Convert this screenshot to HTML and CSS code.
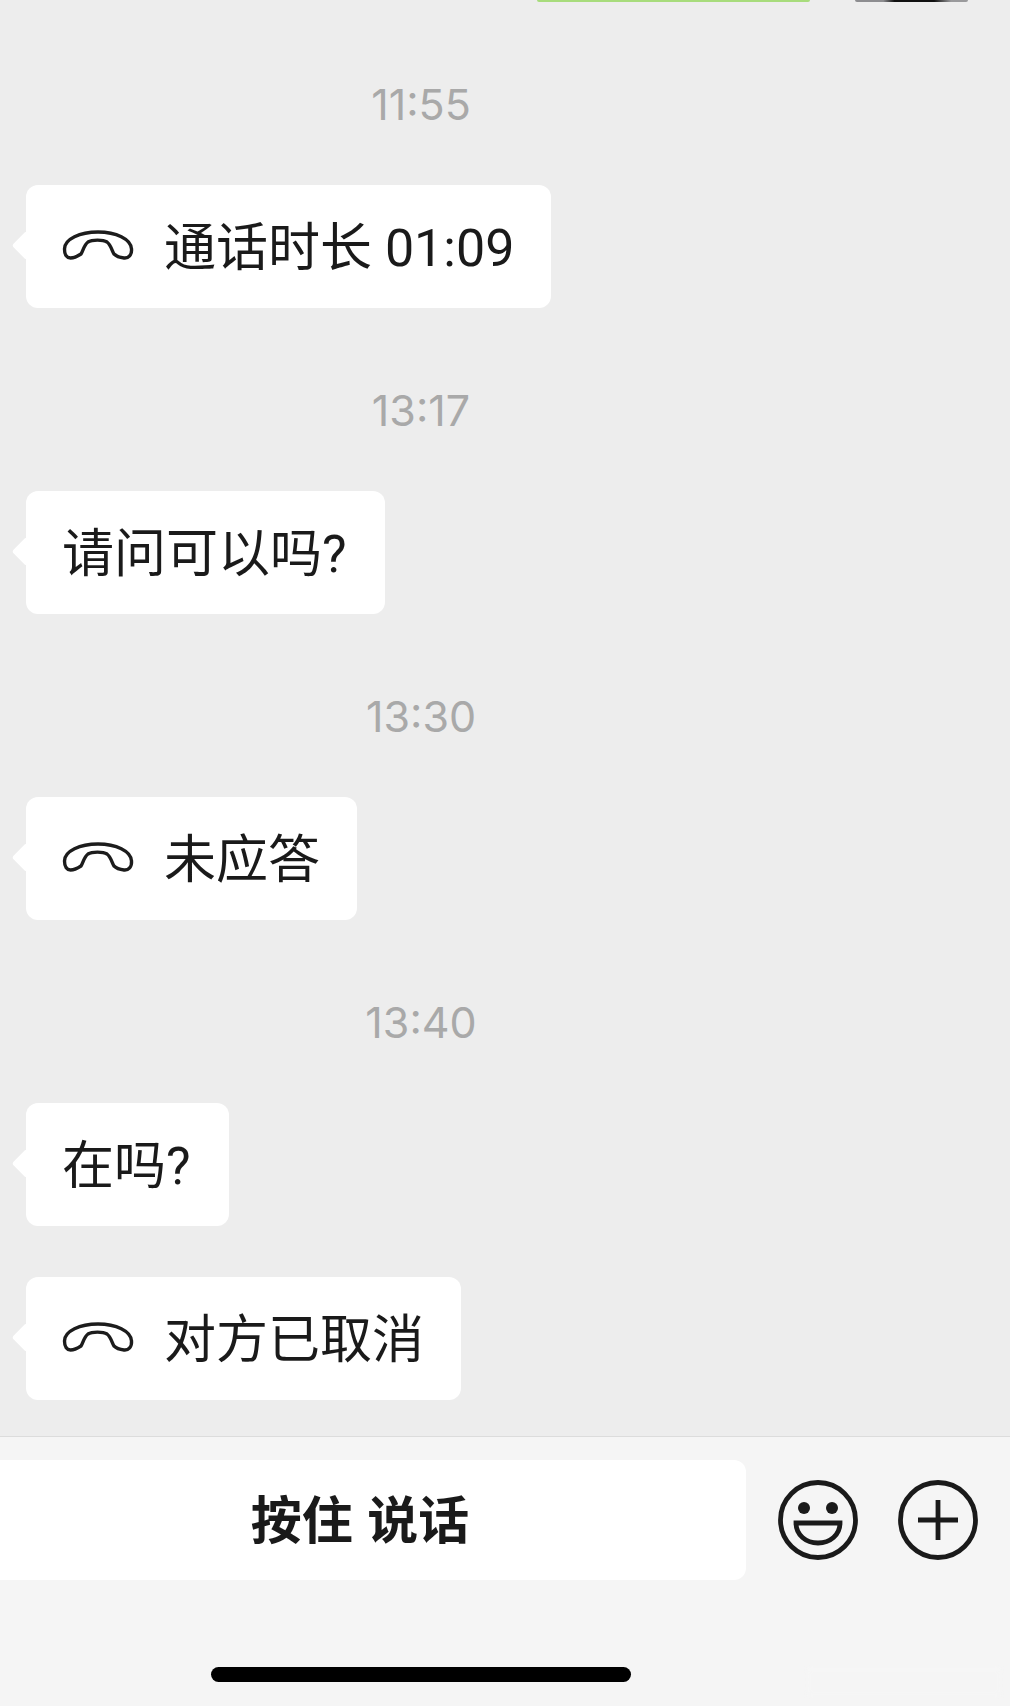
FILE: index.html
```html
<!DOCTYPE html>
<html lang="zh-CN">
<head>
<meta charset="utf-8">
<title>聊天</title>
<link rel="stylesheet" href="styles.css">
</head>
<body>
<svg class="defs" width="0" height="0" aria-hidden="true">
  <symbol id="handset" viewBox="0 0 72 32">
    <path d="M2.500 20C2.500 10 18 3 36 3C54 3 69 10 69.500 20C70 26 66.500 29.500 62 29C58 28.500 54 27 52 25C50 22 49 16 45 13C41 10.500 30 10.500 26 13C22 16 21 22 19 25C16 27 12 29 8.500 29C5 29 2.500 26 2.500 20Z" fill="none" stroke="#1c1c1c" stroke-width="3.400" stroke-linejoin="round"/>
  </symbol>
</svg>
<main class="screen">
  <section class="chat">
    <div class="prev">
      <span class="prev-green"></span>
      <span class="prev-dark"></span>
    </div>

    <div class="time">11:55</div>
    <div class="bubble call"><svg class="handset"><use href="#handset"/></svg><span>通话时长 01:09</span></div>

    <div class="time">13:17</div>
    <div class="bubble">请问可以吗?</div>

    <div class="time">13:30</div>
    <div class="bubble call"><svg class="handset"><use href="#handset"/></svg><span>未应答</span></div>

    <div class="time">13:40</div>
    <div class="bubble">在吗?</div>
    <div class="bubble call next"><svg class="handset"><use href="#handset"/></svg><span>对方已取消</span></div>
  </section>

  <footer class="footer">
    <div class="toolbar">
      <button class="talk" type="button">按住 说话</button>
      <svg class="tool" viewBox="0 0 80 80" aria-label="表情">
        <circle cx="40" cy="40" r="37.500" fill="none" stroke="#1a1a1a" stroke-width="4.800"/>
        <circle cx="26" cy="28" r="6" fill="#1a1a1a"/>
        <circle cx="54" cy="28" r="6" fill="#1a1a1a"/>
        <path d="M18 43H62C62 55 52 63 40 63C28 63 18 55 18 43Z" fill="none" stroke="#1a1a1a" stroke-width="4.800" stroke-linejoin="miter"/>
      </svg>
      <svg class="tool" viewBox="0 0 80 80" aria-label="更多">
        <circle cx="40" cy="40" r="37.500" fill="none" stroke="#1a1a1a" stroke-width="4.800"/>
        <path d="M40 20V60M20 40H60" fill="none" stroke="#1a1a1a" stroke-width="4.800"/>
      </svg>
    </div>
    <div class="home"></div>
    <div class="mark"></div>
  </footer>
</main>
</body>
</html>
```

FILE: styles.css
```css
* { box-sizing: border-box; }

html, body {
  margin: 0;
  padding: 0;
  background: #ededed;
}

.defs { position: absolute; }

.screen {
  width: 1010px;
  height: 1706px;
  overflow: hidden;
  display: flex;
  flex-direction: column;
  font-family: Roboto, "Noto Sans CJK SC", sans-serif;
  color: #1a1a1a;
}

.chat {
  height: 1436px;
  padding-left: 26px;
  background: #ededed;
}

.prev {
  display: flex;
  height: 2px;
  margin-left: -26px;
  padding-left: 537px;
}

.prev-green {
  width: 273px;
  border-radius: 0 0 8px 8px;
  background: #a8dc7c;
}

.prev-dark {
  width: 113px;
  margin-left: 45px;
  border-radius: 0 0 8px 8px;
  background: linear-gradient(90deg, #8d8d90 0 25%, #111 35% 70%, #9a9a9c 85%);
}

.time {
  width: 790px;
  height: 50px;
  margin-top: 77px;
  margin-bottom: 56px;
  text-align: center;
  font-family: Inter, sans-serif;
  font-size: 43px;
  line-height: 50px;
  color: #a9a9a9;
}

.bubble {
  position: relative;
  display: flex;
  align-items: center;
  width: fit-content;
  height: 123px;
  padding: 0 38px 7px 36px;
  border-radius: 12px;
  background: #fff;
  font-size: 52px;
  white-space: pre;
}

.bubble::before {
  content: "";
  position: absolute;
  left: -10px;
  top: 50px;
  width: 21px;
  height: 21px;
  border-radius: 3px;
  background: #fff;
  transform: rotate(45deg);
}

.call {
  gap: 30px;
  padding-right: 37px;
}

.next { margin-top: 51px; }

.handset {
  flex: none;
  width: 72px;
  height: 32px;
  margin-top: 3px;
}

.footer {
  position: relative;
  flex: 1;
  border-top: 1px solid #dcdcdc;
  background: #f5f5f5;
}

.toolbar {
  display: flex;
  align-items: center;
  padding-top: 23px;
}

.talk {
  width: 746px;
  height: 120px;
  padding: 0 26px 7px 0;
  border: 0;
  border-radius: 0 12px 12px 0;
  background: #fff;
  font-family: "Noto Sans CJK SC", sans-serif;
  font-size: 51px;
  font-weight: 700;
  word-spacing: 3px;
  color: #1a1a1a;
}

.tool {
  flex: none;
  width: 80px;
  height: 80px;
}

.talk + .tool { margin-left: 32px; }

.tool + .tool { margin-left: 40px; }

.home {
  width: 420px;
  height: 15px;
  margin: 87px 0 0 211px;
  border-radius: 8px;
  background: #000;
}

.mark {
  position: absolute;
  left: 808px;
  top: 232px;
  width: 192px;
  height: 26px;
  opacity: 0.5;
  background: repeating-linear-gradient(180deg, #fafafa 0 3px, #f1f1f1 3px 6px);
  filter: blur(2px);
}
```
